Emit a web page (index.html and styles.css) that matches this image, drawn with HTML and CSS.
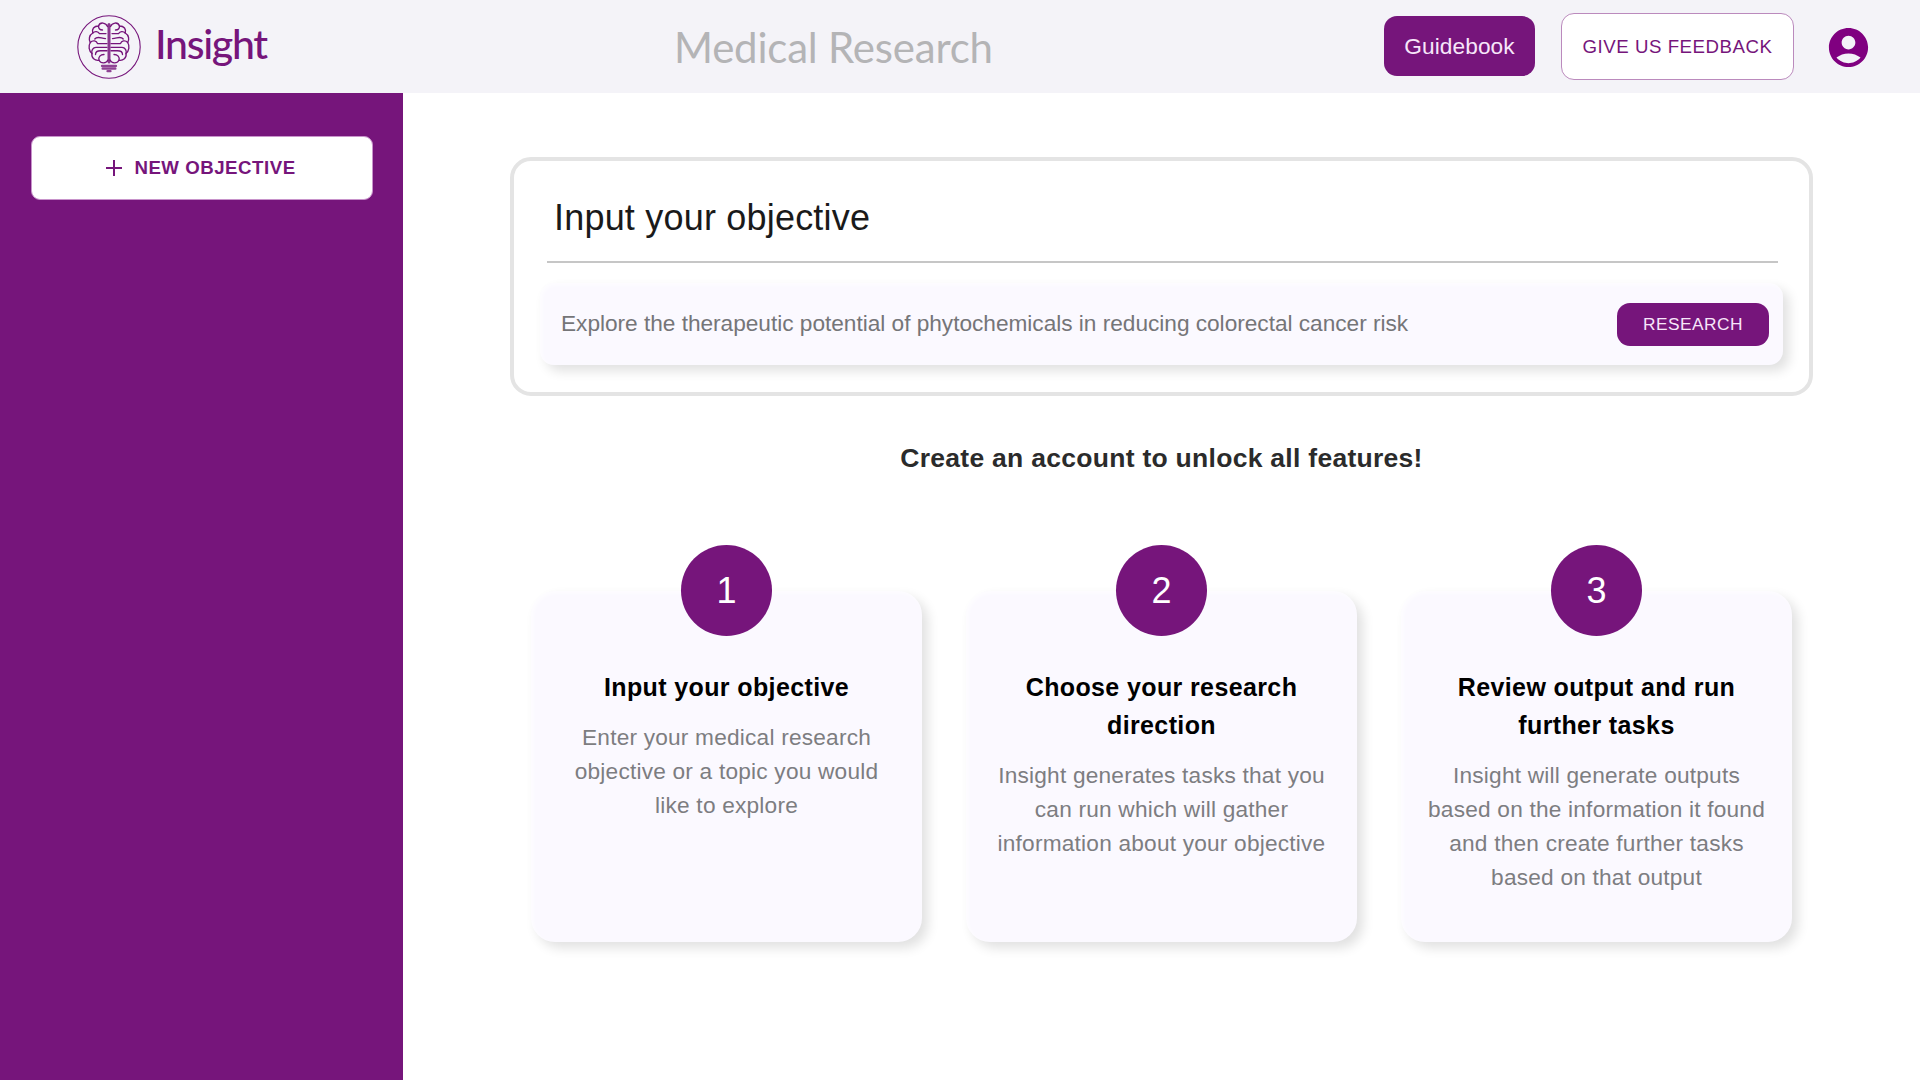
FILE: index.html
```html
<!DOCTYPE html>
<html lang="en">
<head>
<meta charset="utf-8">
<title>Insight</title>
<link rel="stylesheet" href="styles.css">
</head>
<body>
<header class="topbar">
  <div class="brand">
    <svg class="brand-mark" viewBox="0 0 64 64" fill="none" stroke="currentColor" stroke-width="1.35" stroke-linecap="round" stroke-linejoin="round">
      <circle cx="32" cy="32" r="31.2" stroke-width="1.1"/>
      <path d="M32 9.500V47" stroke-width="3" stroke-opacity=".85"/>
      <g>
        <path d="M30.5 11.5C29 7.5 23 6.5 21.500 11C17 11 14.500 14 15.800 18C12 20 11.500 25 13.300 27.500C11 31 12 36 15 38.500C14 43 18 46 22 45.300C24 49 29.500 48.500 31 45"/>
        <path d="M21.500 11C21.500 13.500 23 15 25.500 15M15.800 18C18 15.800 21 16.500 22.500 18.600H29M17.800 24C20.500 20.500 24 23.500 28.500 23.600M13.300 27.500C16 24.500 19.500 26 20.500 28.600H30M19 32.300H30M15 38.500C14 35.500 16 32.300 19 32.300M18.500 39.500C18.500 36.500 21 35.700 23.500 35.700H30M22 45.300C21 42 23.500 39.500 27 39.500"/>
      </g>
      <g transform="matrix(-1 0 0 1 64 0)">
        <path d="M30.5 11.5C29 7.5 23 6.5 21.500 11C17 11 14.500 14 15.800 18C12 20 11.500 25 13.300 27.500C11 31 12 36 15 38.500C14 43 18 46 22 45.300C24 49 29.500 48.500 31 45"/>
        <path d="M21.500 11C21.500 13.500 23 15 25.500 15M15.800 18C18 15.800 21 16.500 22.500 18.600H29M17.800 24C20.500 20.500 24 23.500 28.500 23.600M13.300 27.500C16 24.500 19.500 26 20.500 28.600H30M19 32.300H30M15 38.500C14 35.500 16 32.300 19 32.300M18.500 39.500C18.500 36.500 21 35.700 23.500 35.700H30M22 45.300C21 42 23.500 39.500 27 39.500"/>
      </g>
      <path d="M25 51H39M25.600 53.700H38.400M30.500 56.200H33.500" stroke-width="2.300" stroke-opacity=".8"/>
    </svg>
    <span class="brand-name">Insight</span>
  </div>
  <h1 class="page-title">Medical Research</h1>
  <nav class="actions">
    <button class="btn guidebook">Guidebook</button>
    <button class="btn feedback">GIVE US FEEDBACK</button>
    <svg class="account" viewBox="0 0 24 24" fill="currentColor"><path d="M12 2C6.48 2 2 6.48 2 12s4.48 10 10 10 10-4.48 10-10S17.52 2 12 2zm0 4c1.930 0 3.500 1.570 3.500 3.500S13.930 13 12 13s-3.500-1.570-3.500-3.500S10.070 6 12 6zm0 14c-2.030 0-4.430-.82-6.140-2.880C7.550 15.800 9.680 15 12 15s4.450.8 6.140 2.120C16.430 19.180 14.030 20 12 20z"/></svg>
  </nav>
</header>
<div class="layout">
  <aside class="sidebar">
    <button class="btn new-objective">
      <svg class="plus" viewBox="0 0 16 16" stroke="currentColor" stroke-width="2"><path d="M8 0V16M0 8H16"/></svg>
      <span>NEW OBJECTIVE</span>
    </button>
  </aside>
  <main class="content">
    <section class="panel">
      <h2 class="panel-title">Input your objective</h2>
      <div class="prompt">
        <span class="prompt-text">Explore the therapeutic potential of phytochemicals in reducing colorectal cancer risk</span>
        <button class="btn research">RESEARCH</button>
      </div>
    </section>
    <p class="callout">Create an account to unlock all features!</p>
    <section class="steps">
      <article class="step">
        <div class="step-number">1</div>
        <h3 class="step-title">Input your objective</h3>
        <p class="step-text">Enter your medical research<br>objective or a topic you would<br>like to explore</p>
      </article>
      <article class="step">
        <div class="step-number">2</div>
        <h3 class="step-title">Choose your research<br>direction</h3>
        <p class="step-text">Insight generates tasks that you<br>can run which will gather<br>information about your objective</p>
      </article>
      <article class="step">
        <div class="step-number">3</div>
        <h3 class="step-title">Review output and run<br>further tasks</h3>
        <p class="step-text">Insight will generate outputs<br>based on the information it found<br>and then create further tasks<br>based on that output</p>
      </article>
    </section>
  </main>
</div>
</body>
</html>
```
FILE: styles.css
```css
:root {
  --purple: #76157b;
  --lilac: #fbf9ff;
}

* {
  box-sizing: border-box;
}

body {
  margin: 0;
  height: 1080px;
  overflow: hidden;
  display: flex;
  flex-direction: column;
  background: #fff;
  font-family: "Liberation Sans", Arial, sans-serif;
}

h1, h2, h3, p {
  margin: 0;
}

.btn {
  display: flex;
  align-items: center;
  justify-content: center;
  padding: 0;
  border: 0;
  font-family: inherit;
  white-space: nowrap;
}

.topbar {
  flex: none;
  height: 93px;
  display: grid;
  grid-template-columns: 597px 1fr auto;
  padding: 0 48px 0 77px;
  background: #f4f3f8;
}

.brand {
  display: flex;
  color: var(--purple);
}

.brand-mark {
  width: 64px;
  height: 64px;
  margin-top: 15px;
}

.brand-name {
  margin: 19px 0 0 14px;
  font: 500 41px/50px Lato, sans-serif;
  letter-spacing: -1.3px;
}

.page-title {
  margin-top: 22px;
  font: 400 42px/50px Lato, sans-serif;
  letter-spacing: -0.2px;
  color: #b4b4b6;
}

.actions {
  display: flex;
  align-items: flex-start;
}

.guidebook {
  width: 151px;
  height: 60px;
  margin-top: 16px;
  border-radius: 13px;
  background: var(--purple);
  color: #f7e6fa;
  font-size: 22.67px;
  letter-spacing: 0.1px;
}

.feedback {
  width: 233px;
  height: 67px;
  margin: 13px 31px 0 26px;
  border: 1px solid #bb8abd;
  border-radius: 13px;
  background: #fff;
  color: var(--purple);
  font-size: 18.67px;
  letter-spacing: 0.54px;
}

.account {
  width: 47px;
  height: 47px;
  margin-top: 24px;
  color: #800080;
}

.layout {
  flex: 1;
  display: flex;
}

.sidebar {
  width: 403px;
  padding: 43px 30px 0 31px;
  background: var(--purple);
}

.new-objective {
  width: 100%;
  height: 64px;
  gap: 12px;
  padding-right: 2px;
  border: 1px solid #c893cb;
  border-radius: 9px;
  background: #fff;
  color: var(--purple);
  font-size: 18.67px;
  font-weight: 700;
  letter-spacing: 0.52px;
}

.plus {
  width: 16px;
  height: 16px;
}

.content {
  flex: 1;
  display: flex;
  flex-direction: column;
  padding: 64px 107px 0 107px;
}

.panel {
  height: 239px;
  padding: 0 26px 0 28px;
  border: 4px solid #e4e4e4;
  border-radius: 21px;
}

.panel-title {
  height: 102px;
  margin: 0 5px;
  padding: 31px 0 0 7px;
  border-bottom: 2px solid #c6c6c6;
  font-size: 36px;
  font-weight: 400;
  line-height: 52px;
  letter-spacing: 0.2px;
  color: #1a1a1a;
}

.prompt {
  height: 82px;
  margin: 20px 0 0 -2px;
  display: flex;
  align-items: center;
  justify-content: space-between;
  padding: 0 14px 0 21px;
  border-radius: 14px;
  background: var(--lilac);
  box-shadow: 6px 6px 12px rgba(0, 0, 0, 0.12), inset 2px 2px 4px rgba(255, 255, 255, 0.7);
}

.prompt-text {
  margin-bottom: 2px;
  font-size: 22.67px;
  letter-spacing: -0.02px;
  color: #757578;
}

.research {
  width: 152px;
  height: 43px;
  border-radius: 13px;
  background: var(--purple);
  color: #f7e6fa;
  font-size: 17.33px;
  letter-spacing: 0.45px;
}

.callout {
  margin-top: 42px;
  font-size: 26.5px;
  font-weight: 700;
  line-height: 40px;
  letter-spacing: 0.28px;
  text-align: center;
  color: #2b2b2b;
}

.steps {
  display: grid;
  grid-template-columns: repeat(3, 391px);
  justify-content: space-between;
  margin: 113px 21px 0;
}

.step {
  height: 351px;
  display: flex;
  flex-direction: column;
  align-items: center;
  border-radius: 24px;
  background: var(--lilac);
  box-shadow: 6px 6px 12px rgba(0, 0, 0, 0.12), inset 2px 2px 4px rgba(255, 255, 255, 0.7);
  text-align: center;
}

.step-number {
  flex: none;
  width: 91px;
  height: 91px;
  margin-top: -46px;
  display: flex;
  align-items: center;
  justify-content: center;
  border-radius: 50%;
  background: var(--purple);
  color: #fff;
  font-size: 36px;
}

.step-title {
  margin-top: 32px;
  font-size: 25px;
  line-height: 38px;
  letter-spacing: 0.38px;
  color: #000;
}

.step-text {
  margin-top: 14px;
  font-size: 22.67px;
  line-height: 34px;
  letter-spacing: 0.21px;
  color: #7d7d81;
}
```
